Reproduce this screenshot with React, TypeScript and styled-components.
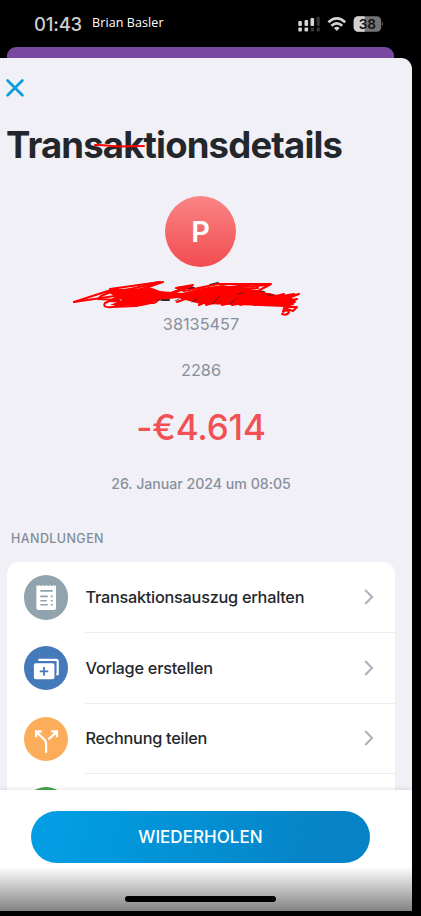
import React from "react";
import styled, { createGlobalStyle } from "styled-components";

const GlobalStyle = createGlobalStyle`
  *, *::before, *::after { box-sizing: border-box; }
  body { margin: 0; background: #000; font-family: Inter, "Liberation Sans", sans-serif; }
  svg { display: block; }
`;

const Screen = styled.div`
  width: 421px;
  height: 916px;
  background: #000;
  overflow: hidden;
  display: flex;
  flex-direction: column;
`;

const StatusBar = styled.header`
  height: 47px;
  flex: none;
  display: flex;
  align-items: center;
  padding-left: 34px;
`;

const Clock = styled.span`
  width: 58px;
  font-size: 18.5px;
  line-height: 22px;
  font-weight: 500;
  letter-spacing: -0.2px;
  color: #cdcdcd;
  padding-top: 1px;
`;

const UserLabel = styled.span`
  width: 206px;
  font-family: "Open Sans", "Noto Sans", sans-serif;
  font-size: 12.5px;
  line-height: 16px;
  letter-spacing: 0.1px;
  padding-bottom: 2px;
  color: #fff;
  white-space: nowrap;
`;

const PurpleLayer = styled.div`
  height: 11px;
  flex: none;
  margin: 0 27px 0 7px;
  background: #7749a0;
  border-radius: 9px 9px 0 0;
`;

const Sheet = styled.main`
  width: 412px;
  height: 853px;
  flex: none;
  display: flex;
  flex-direction: column;
  background: #f1f0f6;
  border-radius: 0 11px 0 0;
  overflow: hidden;
`;

const Content = styled.div`
  height: 732px;
  flex: none;
  overflow: hidden;
  padding: 20px 17px 0 7px;
  display: flex;
  flex-direction: column;
`;

const CloseButton = styled.button`
  width: 20px;
  height: 20px;
  flex: none;
  margin-left: -2px;
  padding: 0;
  border: 0;
  background: none;
`;

const Title = styled.h1`
  position: relative;
  margin: 25px 0 0 -1px;
  height: 44px;
  flex: none;
  font-size: 36.5px;
  line-height: 44px;
  font-weight: 700;
  letter-spacing: -0.83px;
  color: #23272c;
  white-space: nowrap;
`;

const TitleStroke = styled.svg`
  position: absolute;
  left: 87px;
  top: 20px;
`;

const Summary = styled.section`
  display: flex;
  flex-direction: column;
  align-items: center;
  padding-top: 29px;
`;

const Avatar = styled.div`
  width: 71px;
  height: 71px;
  margin-left: -1px;
  border-radius: 50%;
  background: linear-gradient(#fa8585, #f14c50);
  color: #fff;
  font-size: 29px;
  font-weight: 600;
  line-height: 72px;
  text-align: center;
`;

const Redaction = styled.svg`
  margin: 10px 0 0 -30px;
`;

const Text = styled.p<{ $size: number; $line: number; $top?: number; $weight?: number; $spacing?: number; $color?: string }>`
  margin: ${(p) => p.$top ?? 0}px 0 0;
  font-size: ${(p) => p.$size}px;
  line-height: ${(p) => p.$line}px;
  font-weight: ${(p) => p.$weight ?? 400};
  letter-spacing: ${(p) => p.$spacing ?? 0}px;
  color: ${(p) => p.$color ?? "#86919c"};
  white-space: nowrap;
`;

const SectionTitle = styled.h2`
  margin: 35px 0 0 4px;
  height: 20px;
  font-size: 12.5px;
  line-height: 20px;
  font-weight: 500;
  letter-spacing: 0.42px;
  color: #828d98;
`;

const Card = styled.ul`
  margin: 13px 0 0;
  padding: 0;
  list-style: none;
  background: #fff;
  border-radius: 12px 12px 0 0;
`;

const ActionRow = styled.li`
  height: 70.8px;
  display: flex;
  align-items: center;
  padding-left: 16.7px;
`;

const ActionIcon = styled.span<{ $color: string }>`
  width: 44.6px;
  height: 44.6px;
  flex: none;
  border-radius: 50%;
  background: ${(p) => p.$color};
`;

const ActionBody = styled.div`
  align-self: stretch;
  flex: 1;
  display: flex;
  align-items: center;
  justify-content: space-between;
  margin-left: 17.2px;
  padding-right: 21px;
  border-bottom: 1px solid #eeeef1;
  font-size: 16.3px;
  font-weight: 500;
  letter-spacing: -0.25px;
  color: #24282d;
  white-space: nowrap;
`;

const Footer = styled.footer`
  position: relative;
  flex: 1;
  background: linear-gradient(#fff 77px, #838383 121px);
  box-shadow: 0 -1px 4px rgba(0, 0, 0, 0.1);
  padding: 21px 42px 0 31px;
  display: flex;
  flex-direction: column;
`;

const RepeatButton = styled.button`
  height: 52px;
  flex: none;
  padding: 0;
  border: 0;
  border-radius: 26px;
  background: linear-gradient(100deg, #029de2 10%, #0683c6 85%);
  color: #fff;
  font: 500 17px/52px Inter, sans-serif;
  letter-spacing: 0.05px;
`;

const HomeIndicator = styled.div`
  width: 151px;
  height: 6px;
  margin: 33px 0 0 94px;
  border-radius: 3px;
  background: #000;
`;

const StatusIcons = () => (
  <svg width="90" height="20" viewBox="298 14 90 20">
    <g fill="#d4d4d4">
      <rect x="298.3" y="21" width="3.6" height="5" rx="1" />
      <rect x="304.5" y="20" width="3.6" height="6" rx="1" />
      <rect x="310.5" y="18" width="3.6" height="8" rx="1" />
      <rect x="298.3" y="27.5" width="3.6" height="4" rx="1" />
      <rect x="304.5" y="27.5" width="3.6" height="4" rx="1" />
    </g>
    <g fill="#343434">
      <rect x="316.6" y="16.7" width="3.2" height="9.3" rx="1" />
      <rect x="310.5" y="27.5" width="3.6" height="4" rx="1" />
      <rect x="316.6" y="27.5" width="3.2" height="4" rx="1" />
    </g>
    <g fill="none" stroke="#d4d4d4" strokeWidth="2.7">
      <path d="M328.4 22.3Q336.8 14.6 345.2 22.3" />
      <path d="M331.4 25.8Q336.8 21 342.2 25.8" />
    </g>
    <path d="M333.9 28Q336.8 25.5 339.7 28L336.8 31Z" fill="#d4d4d4" />
    <rect x="353.7" y="16.3" width="27.5" height="15.4" rx="4.5" fill="#737373" />
    <path d="M364.7 16.3H358.2A4.5 4.5 0 0 0 353.7 20.8V27.2A4.5 4.5 0 0 0 358.2 31.7H364.7Z" fill="#d0d0d0" />
    <path d="M382 21.8Q384 24 382 26.2Z" fill="#737373" />
    <text x="367.4" y="28.9" textAnchor="middle" fontFamily="Inter, sans-serif" fontSize="13.6" fontWeight="600" fill="#111">38</text>
  </svg>
);

const Scribble = () => (
  <Redaction width="228" height="42" viewBox="72 276 228 42" fill="none" strokeLinecap="round" strokeLinejoin="round">
    <path d="M112 292h8M116 300h3M144 284l16-3M162 299h7M186 287h8M210 284l8-2M203 300h7M256 290l8 1" stroke="#252a30" strokeWidth="2" />
    <path d="M111 293L118 288L152 287L160 290L182 292L202 287L222 284L244 287L268 292L292 297L294 304L284 306L238 304L200 303L178 297L160 299L136 305L110 304L122 299Z" fill="#f00" />
    <g stroke="#f00" strokeWidth="2">
      <path d="M74 301L114 288L118 288L101 295L98 298L116 299L154 284L163 281L111 292L130 290L105 302Q102 307 112 306L136 305L156 301L160 297L115 305L173 292L192 285L177 287L184 290L218 283L271 283L258 290L237 288L258 287L256 283L212 288L177 301L204 291L230 289L199 304L217 296L241 290L206 304L252 290L222 304L270 293L240 304L284 293L254 304L299 293L278 301L297 298L286 303L295 301L286 306L297 306L293 310L284 307L283 311Q287 308 289 311Q287 315 282 313" />
      <path d="M74 301L128 293L160 281L110 288M109 300L154 302M148 300L193 284L176 287M217 288L268 284M232 304L294 293" />
    </g>
    <path d="M158 299l7 0M212 303l8-8M230 303l6-5M192 301l5-3M267 294l6 0M238 293l5-1M175 300l4-2" stroke="#3a2027" strokeWidth="0.8" />
  </Redaction>
);

const ReceiptIcon = () => (
  <svg width="44.6" height="44.6" viewBox="0 0 45 45">
    <path d="M12.5 10L14 11.3L15.5 10L17.5 11.3L19.2 10L21 11.3L22.7 10L24.5 11.3L26.3 10L28 11.3L29.7 10L31 11.3L32.3 10V33.5Q32.3 35.3 30.5 35.3H14.3Q12.5 35.3 12.5 33.5Z" fill="#fff" />
    <path d="M16.5 16H29M16.5 21.5H24M16.5 26H23M16.5 30H24M27 21.5H29M27 26H29M27 30H29" stroke="#91a4ad" strokeWidth="1.7" />
  </svg>
);

const TemplateIcon = () => (
  <svg width="44.6" height="44.6" viewBox="0 0 45 45">
    <path d="M14.5 14H32.5Q34 14 34 15.5V28.5H32.5" fill="none" stroke="#fff" strokeWidth="2.2" />
    <rect x="10" y="17.5" width="20.7" height="16" rx="1.8" fill="#fff" />
    <path d="M20.2 21.3V29.9M15.9 25.6H24.5" stroke="#4479ba" strokeWidth="1.8" />
  </svg>
);

const SplitIcon = () => (
  <svg width="44.6" height="44.6" viewBox="0 0 45 45" fill="none" stroke="#fff" strokeWidth="2.3">
    <path d="M22.3 36V27Q22.3 24.5 20.5 22.7L12.5 15M24.5 22.7L33 15M12.2 20.5V14.5H18M27.5 14.5H33.3V20.5" />
  </svg>
);

const Chevron = () => (
  <svg width="10" height="16" viewBox="0 0 10 16" fill="none" stroke="#aeb5bc" strokeWidth="2.2">
    <path d="M1.2 1L8 8L1.2 15" />
  </svg>
);

const actions = [
  { label: "Transaktionsauszug erhalten", color: "#91a4ad", Icon: ReceiptIcon },
  { label: "Vorlage erstellen", color: "#4479ba", Icon: TemplateIcon },
  { label: "Rechnung teilen", color: "#fcad5c", Icon: SplitIcon },
];

export default function App() {
  return (
    <>
      <GlobalStyle />
      <Screen>
        <StatusBar>
          <Clock>01:43</Clock>
          <UserLabel>Brian Basler</UserLabel>
          <StatusIcons />
        </StatusBar>
        <PurpleLayer />
        <Sheet>
          <Content>
            <CloseButton aria-label="Schließen">
              <svg width="20" height="20" viewBox="0 0 20 20" stroke="#109ddc" strokeWidth="2.8" strokeLinecap="round">
                <path d="M2.6 2.4L17.4 17.2M17.4 2.4L2.6 17.2" />
              </svg>
            </CloseButton>
            <Title>
              Transaktionsdetails
              <TitleStroke width="54" height="6" viewBox="0 0 54 6" fill="none" stroke="#f00" strokeWidth="2" strokeLinecap="round">
                <path d="M2 2L11 2.3L24 3.5L51 3" />
              </TitleStroke>
            </Title>
            <Summary>
              <Avatar>P</Avatar>
              <Scribble />
              <Text $size={16.3} $line={20} $top={-5}>38135457</Text>
              <Text $size={16.3} $line={20} $top={26}>2286</Text>
              <Text $size={35} $line={44} $top={25} $weight={500} $spacing={-0.2} $color="#f15055">-€4.614</Text>
              <Text $size={14.2} $line={20} $top={25} $weight={500} $spacing={-0.04}>26. Januar 2024 um 08:05</Text>
            </Summary>
            <SectionTitle>HANDLUNGEN</SectionTitle>
            <Card>
              {actions.map(({ label, color, Icon }) => (
                <ActionRow key={label}>
                  <ActionIcon $color={color}><Icon /></ActionIcon>
                  <ActionBody>
                    <span>{label}</span>
                    <Chevron />
                  </ActionBody>
                </ActionRow>
              ))}
              <ActionRow>
                <ActionIcon $color="#43a648" />
              </ActionRow>
            </Card>
          </Content>
          <Footer>
            <RepeatButton>WIEDERHOLEN</RepeatButton>
            <HomeIndicator />
          </Footer>
        </Sheet>
      </Screen>
    </>
  );
}
